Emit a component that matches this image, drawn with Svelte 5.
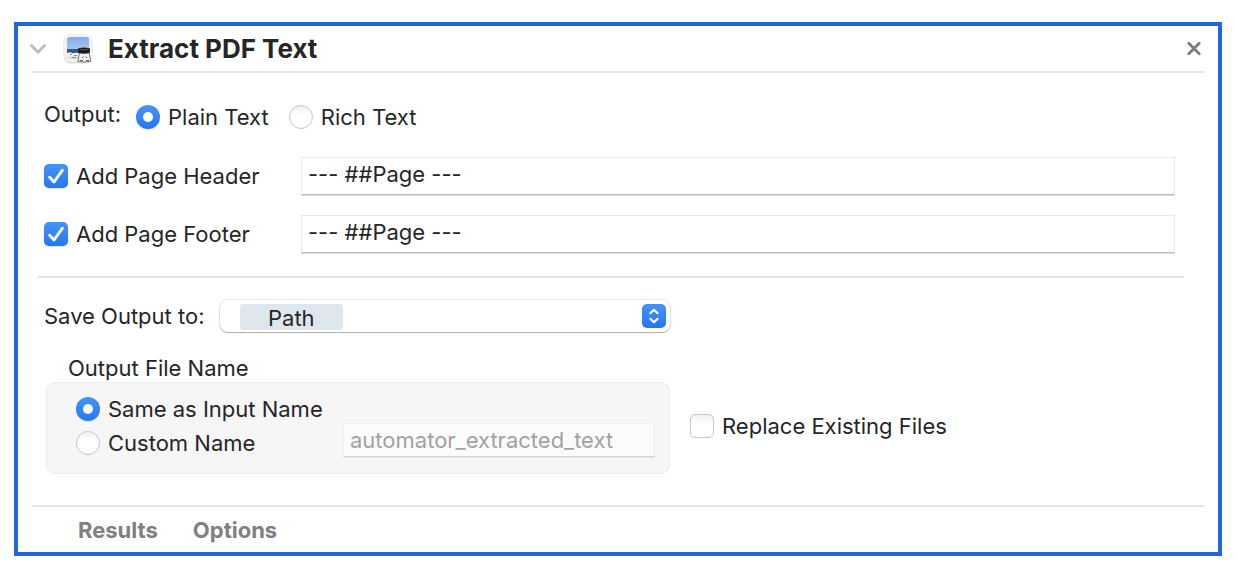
<script>
  let output = $state('plain');
  let header = $state(true);
  let footer = $state(true);
  let headerText = $state('--- ##Page ---');
  let footerText = $state('--- ##Page ---');
  let naming = $state('same');
  let customName = $state('automator_extracted_text');
  let replace = $state(false);
</script>

<main class="action">
  <header class="title-bar">
    <button class="icon-button disclosure" aria-label="Collapse">
      <svg width="18" height="12" viewBox="0 0 18 12"><path d="M2.4 2.4 9 9.2l6.600-6.800" fill="none" stroke="#bcbcbc" stroke-width="2.800" stroke-linecap="round" stroke-linejoin="round" /></svg>
    </button>
    <svg class="app-icon" width="32" height="32" viewBox="0 0 32 32" aria-hidden="true">
      <defs>
        <linearGradient id="sky" x1="0" y1="0" x2="0" y2="1">
          <stop offset="0" stop-color="#86abe4" />
          <stop offset="1" stop-color="#abc7f1" />
        </linearGradient>
        <clipPath id="photo"><rect x="5" y="4" width="22" height="22" rx="3" /></clipPath>
      </defs>
      <rect x="1.500" y="1.500" width="29" height="29" rx="7" fill="#dedede" />
      <rect x="2" y="1" width="28" height="28" rx="6.500" fill="#f1f1f1" />
      <g clip-path="url(#photo)">
        <rect x="5" y="4" width="22" height="13" fill="url(#sky)" />
        <rect x="5" y="16" width="22" height="5" fill="#31578c" />
        <path d="M5 20l3-.8 3 1 3-.5 4 .4v7H5z" fill="#edf3f5" />
        <path d="M5 24l4-1 3 1 4-1v5H5z" fill="#e4e0d2" />
        <path d="M8 21.500h2M12 22.500h3M10 24.500h4" stroke="#7c8c94" stroke-width="1" />
      </g>
      <path d="M17.500 19.500h9.500l1.800 9q-6.800 1-13 0z" fill="#f0f0f0" stroke="#777" stroke-width="1" />
      <path d="M16 16q0-1.500 6-1.500t6 1.500l-.3 4q-5.700 1.600-11.400 0z" fill="#17191c" />
      <path d="M17.500 16.300q4.500 1.200 9 0" fill="none" stroke="#55595e" />
      <path d="M20 25l1.500-1.500M24 23.500l1 1.500M18 27.500h3M24 27.500h3" fill="none" stroke="#666" stroke-width="1" />
    </svg>
    <h1>Extract PDF Text</h1>
    <button class="icon-button close" aria-label="Close">
      <svg width="14" height="14" viewBox="0 0 14 14"><path d="M1.800 1.300l10.400 10.400M12.200 1.300L1.800 11.700" stroke="#7d7d7d" stroke-width="2.800" stroke-linecap="round" /></svg>
    </button>
  </header>

  <section class="content">
    <div class="output-row" role="radiogroup" aria-labelledby="output-label">
      <span id="output-label" class="output-label">Output:</span>
      <label class="choice"><input type="radio" value="plain" bind:group={output} />Plain Text</label>
      <label class="choice"><input type="radio" value="rich" bind:group={output} />Rich Text</label>
    </div>

    <div class="page-rows">
      <label class="choice"><input type="checkbox" bind:checked={header} />Add Page Header</label>
      <input class="field" type="text" aria-label="Page header" bind:value={headerText} />
      <label class="choice"><input type="checkbox" bind:checked={footer} />Add Page Footer</label>
      <input class="field" type="text" aria-label="Page footer" bind:value={footerText} />
    </div>

    <hr />

    <div class="save-row">
      <label for="save-to">Save Output to:</label>
      <div class="popup">
        <span class="token"></span>
        <svg class="stepper" width="24" height="24" viewBox="0 0 24 24" aria-hidden="true">
          <defs>
            <linearGradient id="blue" x1="0" y1="0" x2="0" y2="1">
              <stop offset="0" stop-color="#4893f8" />
              <stop offset="1" stop-color="#2377f5" />
            </linearGradient>
          </defs>
          <rect width="24" height="24" rx="5" fill="url(#blue)" />
          <path d="M8.400 9.200 12 5.800l3.600 3.400M8.400 14.800l3.600 3.400 3.600-3.400" fill="none" stroke="#fff" stroke-width="2.200" stroke-linecap="round" stroke-linejoin="round" />
        </svg>
        <select id="save-to"><option>Path</option></select>
      </div>
    </div>

    <div class="file-row">
      <div class="file-name" role="radiogroup" aria-labelledby="file-caption">
        <div id="file-caption" class="caption">Output File Name</div>
        <div class="group-box">
          <div class="stack">
            <label class="choice"><input type="radio" value="same" bind:group={naming} />Same as Input Name</label>
            <label class="choice"><input type="radio" value="custom" bind:group={naming} />Custom Name</label>
          </div>
          <input class="field small" type="text" aria-label="Custom name" disabled={naming === 'same'} bind:value={customName} />
        </div>
      </div>
      <label class="choice replace"><input type="checkbox" bind:checked={replace} />Replace Existing Files</label>
    </div>
  </section>

  <footer class="tabs">
    <button>Results</button>
    <button>Options</button>
  </footer>
</main>

<style>
  :global(body) {
    background: #fff;
  }
  .action,
  .action * {
    box-sizing: border-box;
  }
  .action {
    margin: 22px 14px;
    border: 4px solid #2266dc;
    padding: 0 14px;
    background: #fff;
    color: #262626;
    font: 22px/28px Inter, 'Liberation Sans', sans-serif;
  }
  button,
  input,
  select {
    margin: 0;
    padding: 0;
    border: 0;
    background: none;
    color: inherit;
    font: inherit;
  }
  .title-bar {
    display: flex;
    align-items: center;
    height: 47px;
    border-bottom: 2px solid #e4e4e4;
  }
  .icon-button {
    display: flex;
  }
  .disclosure {
    margin: 0 15px 0 -3px;
  }
  h1 {
    margin: 0 0 0 14px;
    font-size: 26px;
    line-height: 32px;
    font-weight: 700;
  }
  .close {
    margin: 0 3px 0 auto;
  }
  .content {
    padding: 30px 0 31px 12px;
  }
  .output-row {
    display: flex;
    gap: 20px;
  }
  .output-label {
    margin: -3px -5px 3px 0;
  }
  .choice {
    display: flex;
    align-items: center;
    gap: 8px;
    white-space: nowrap;
  }
  input[type='radio'],
  input[type='checkbox'] {
    appearance: none;
    flex: none;
    display: grid;
    place-items: center;
    width: 24px;
    height: 24px;
    border: 1px solid #c6c6c6;
    background: linear-gradient(#f0f0f0, #fff 40%);
  }
  input[type='radio'] {
    border-radius: 50%;
  }
  input[type='checkbox'] {
    border-radius: 5px;
  }
  input[type='radio']:checked,
  input[type='checkbox']:checked {
    border: 0;
    background: linear-gradient(#4893f8, #2377f5);
    box-shadow: 0 1px 1px #2377f533;
  }
  input[type='radio']:checked::before {
    content: '';
    width: 10px;
    height: 10px;
    border-radius: 50%;
    background: #fff;
  }
  input[type='checkbox']:checked {
    background:
      url("data:image/svg+xml,%3Csvg xmlns='http://www.w3.org/2000/svg' viewBox='0 0 24 24'%3E%3Cpath d='M5.700 13.200 10 18 18.300 6.300' fill='none' stroke='white' stroke-width='2.900' stroke-linecap='round' stroke-linejoin='round'/%3E%3C/svg%3E"),
      linear-gradient(#4893f8, #2377f5);
  }
  .page-rows {
    display: grid;
    grid-template-columns: 257px 1fr;
    row-gap: 20px;
    margin: 26px 29px 23px 0;
  }
  .field {
    width: 100%;
    height: 38px;
    padding: 0 6px 5px;
    border: 1px solid #e9e9e9;
    border-bottom-color: #bdbdbd;
    background: #fff;
    box-shadow: 0 1px #dedede;
  }
  .field.small {
    flex: 1;
    height: 34px;
    padding: 0 6px;
    border-color: #f0f0f0;
    border-bottom-color: #d2d2d2;
    background: #fbfbfb;
    box-shadow: 0 1px #e8e8e8;
  }
  .field:disabled {
    color: #a2a2a2;
  }
  hr {
    height: 2px;
    margin: 0 20px 21px -6px;
    border: 0;
    background: #e4e4e4;
  }
  .save-row {
    display: flex;
    align-items: center;
    justify-content: space-between;
    width: 626px;
    max-width: 100%;
  }
  .popup {
    display: grid;
    align-items: center;
    width: 450px;
    height: 32px;
    margin: 1px 0;
    border-radius: 8px;
    background: #fff;
    box-shadow: 0 0 1px 1px #0000001a, 0 1px 1px #00000040;
  }
  .popup > * {
    grid-area: 1 / 1;
  }
  .token {
    width: 103px;
    height: 26px;
    margin: 2px 0 0 20px;
    border-radius: 3px;
    background: #dfe7ee;
  }
  .stepper {
    justify-self: end;
    margin-right: 4px;
  }
  select {
    appearance: none;
    width: 100%;
    height: 32px;
    padding: 3px 32px 0 48px;
    border-radius: 8px;
  }
  .file-row {
    display: flex;
    align-items: flex-end;
    gap: 20px;
    margin-top: 21px;
  }
  .file-name {
    width: 624px;
    margin-left: 2px;
  }
  .caption {
    padding-left: 22px;
  }
  .group-box {
    display: flex;
    align-items: flex-end;
    gap: 20px;
    height: 92px;
    padding: 14px 14px 16px 29px;
    border: 1px solid #ebebeb;
    border-radius: 9px;
    background: #f6f6f6;
  }
  .stack {
    display: grid;
    align-self: flex-start;
    gap: 10px;
    width: 247px;
  }
  .stack .choice {
    height: 24px;
  }
  .replace {
    margin-bottom: 34px;
  }
  .tabs {
    display: flex;
    gap: 35px;
    height: 47px;
    padding-left: 46px;
    border-top: 2px solid #e4e4e4;
  }
  .tabs button {
    color: #808080;
    font-weight: 700;
  }
</style>
